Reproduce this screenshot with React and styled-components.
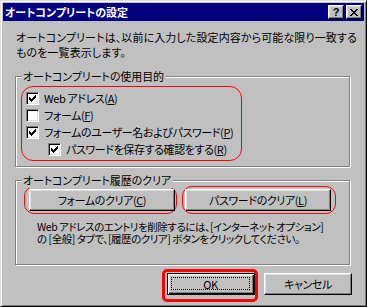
import React from "react";
import styled, { createGlobalStyle } from "styled-components";

const GlobalStyle = createGlobalStyle`
  html, body { margin: 0; padding: 0; background: #c0c0c0; }
  body { font-family: "Noto Sans CJK JP", "Liberation Sans", sans-serif; }
`;

const Window = styled.div`
  width: 367px;
  height: 307px;
  box-sizing: border-box;
  overflow: hidden;
  background: #c0c0c0;
  border: 1px solid;
  border-color: #dfdfdf #000 #000 #dfdfdf;
  box-shadow: inset 1px 1px #fff, inset -1px -1px #808080;
  padding: 2px;
  display: flex;
  flex-direction: column;
  font-size: 11px;
  color: #000;
  font-feature-settings: "palt";
`;

const TitleBar = styled.div`
  height: 18px;
  flex: none;
  background: #000080;
  color: #fff;
  display: flex;
  align-items: center;
  padding: 0 2px;
  font-weight: bold;
  line-height: 18px;
`;

const TitleButtons = styled.div`
  margin-left: auto;
  display: flex;
  gap: 2px;
`;

const CapButton = styled.div`
  box-sizing: border-box;
  width: 16px;
  height: 14px;
  background: #c0c0c0;
  border: 1px solid;
  border-color: #fff #000 #000 #fff;
  box-shadow: inset -1px -1px #808080, inset 1px 1px #dfdfdf;
  display: flex;
  align-items: center;
  justify-content: center;
  color: #000;
  font-family: "Liberation Sans", sans-serif;
  font-weight: bold;
  font-size: 11px;
  line-height: 12px;
`;

const Body = styled.div`
  display: flex;
  flex-direction: column;
  padding: 9px 14px 0 12px;
`;

const Description = styled.p`
  margin: 0 0 0 1px;
  line-height: 15px;
  white-space: nowrap;
  letter-spacing: 0.1px;
`;

const Group = styled.div`
  position: relative;
  flex: none;
  margin-top: ${p => p.$mt}px;
  height: ${p => p.$h}px;
  box-sizing: border-box;
  border: 1px solid #808080;
  box-shadow: inset 1px 1px #fff, 1px 1px #fff;
  padding: ${p => p.$pad};
`;

const Legend = styled.span`
  position: absolute;
  top: -9px;
  left: 6px;
  padding: 0 2px 0 1px;
  background: #c0c0c0;
  line-height: 16px;
  white-space: nowrap;
  letter-spacing: -0.1px;
`;

const Highlight = styled.div`
  box-sizing: border-box;
  border: ${p => p.$bw || 1}px solid #ff0000;
  border-radius: ${p => p.$r}px;
  padding: ${p => p.$pad};
  width: ${p => (p.$w ? `${p.$w}px` : "auto")};
`;

const CheckList = styled.div`
  display: flex;
  flex-direction: column;
  gap: 4px;
`;

const CheckRow = styled.label`
  display: flex;
  align-items: center;
  gap: 5px;
  height: 13px;
  line-height: 13px;
  margin-left: ${p => (p.$indent ? 22 : 0)}px;
  white-space: nowrap;
  letter-spacing: -0.4px;
`;

const Box = styled.span`
  box-sizing: border-box;
  width: 13px;
  height: 13px;
  flex: none;
  background: #fff;
  border: 1px solid;
  border-color: #808080 #fff #fff #808080;
  box-shadow: inset 1px 1px #000, inset -1px -1px #dfdfdf;
  position: relative;
  svg { position: absolute; left: -1px; top: -1px; }
`;

const ButtonRow = styled.div`
  display: flex;
  gap: 5px;
`;

const Button = styled.div`
  box-sizing: border-box;
  width: ${p => p.$w}px;
  height: 22px;
  background: #c0c0c0;
  border: 1px solid;
  border-color: #fff #000 #000 #fff;
  box-shadow: inset -1px -1px #808080, inset 1px 1px #dfdfdf;
  display: flex;
  align-items: center;
  justify-content: center;
  line-height: 14px;
  white-space: nowrap;
  letter-spacing: -0.4px;
`;

const DefaultButton = styled(Button)`
  border-color: #000;
  box-shadow: inset 1px 1px #fff, inset -1px -1px #000, inset -2px -2px #808080,
    inset 2px 2px #dfdfdf;
  padding: 3px 4px 4px 3px;
`;

const Focus = styled.span`
  flex: 1;
  align-self: stretch;
  border: 1px dotted #000;
  display: flex;
  align-items: center;
  justify-content: center;
`;

const Info = styled.p`
  margin: 7px 0 0 13px;
  font-size: 10.5px;
  line-height: 12px;
  white-space: nowrap;
  letter-spacing: -0.45px;
`;

const Footer = styled.div`
  display: flex;
  justify-content: flex-end;
  align-items: flex-start;
  gap: 6px;
  margin: 4px -2px 0 0;
`;

const Spaced = styled.div`
  margin-top: 4px;
`;

const checkPath =
  "M3 5h1v3h-1zM4 6h1v3h-1zM5 7h1v3h-1zM6 6h1v3h-1zM7 5h1v3h-1zM8 4h1v3h-1zM9 3h1v3h-1z";

const CheckBox = ({ checked }) => (
  <Box>
    {checked && (
      <svg width="13" height="13" viewBox="0 0 13 13" shapeRendering="crispEdges">
        <path d={checkPath} fill="#000" />
      </svg>
    )}
  </Box>
);

const CloseGlyph = () => (
  <svg width="8" height="7" viewBox="0 0 8 7" shapeRendering="crispEdges">
    <path
      d="M0 0h2v1h-2zM6 0h2v1h-2zM1 1h2v1h-2zM5 1h2v1h-2zM2 2h4v1h-4zM3 3h2v1h-2zM2 4h4v1h-4zM1 5h2v1h-2zM5 5h2v1h-2zM0 6h2v1h-2zM6 6h2v1h-2z"
      fill="#000"
    />
  </svg>
);

const items = [
  { label: "Web アドレス", key: "A", checked: true },
  { label: "フォーム", key: "F", checked: false },
  { label: "フォームのユーザー名およびパスワード", key: "P", checked: true },
  { label: "パスワードを保存する確認をする", key: "R", checked: true, indent: true },
];

export default function App() {
  return (
    <>
      <GlobalStyle />
      <Window>
        <TitleBar>
          オートコンプリートの設定
          <TitleButtons>
            <CapButton>?</CapButton>
            <CapButton>
              <CloseGlyph />
            </CapButton>
          </TitleButtons>
        </TitleBar>
        <Body>
          <Description>
            オートコンプリートは、以前に入力した設定内容から可能な限り一致する
            <br />
            ものを一覧表示します。
          </Description>

          <Group $mt={16} $h={91} $pad="9px 0 0 5px">
            <Legend>オートコンプリートの使用目的</Legend>
            <Highlight $w={221} $r={12} $pad="5px 4px 4px 4px">
              <CheckList>
                {items.map(it => (
                  <CheckRow key={it.key} $indent={it.indent}>
                    <CheckBox checked={it.checked} />
                    <span>
                      {it.label}(<u>{it.key}</u>)
                    </span>
                  </CheckRow>
                ))}
              </CheckList>
            </Highlight>
          </Group>

          <Group $mt={13} $h={85} $pad="5px 0 0 8px">
            <Legend>オートコンプリート履歴のクリア</Legend>
            <ButtonRow>
              <Highlight $r={10} $pad="2px 1px 2px 4px">
                <Button $w={146}>
                  フォームのクリア(<u>C</u>)
                </Button>
              </Highlight>
              <Highlight $r={10} $pad="2px 4px 2px 2px">
                <Button $w={146}>
                  パスワードのクリア(<u>L</u>)
                </Button>
              </Highlight>
            </ButtonRow>
            <Info>
              Web アドレスのエントリを削除するには、[インターネット オプション]
              <br />
              の [全般] タブで、[履歴のクリア] ボタンをクリックしてください。
            </Info>
          </Group>

          <Footer>
            <Highlight $bw={3} $r={5} $pad="1px 0 4px 2px">
              <DefaultButton $w={88}>
                <Focus>OK</Focus>
              </DefaultButton>
            </Highlight>
            <Spaced>
              <Button $w={88}>キャンセル</Button>
            </Spaced>
          </Footer>
        </Body>
      </Window>
    </>
  );
}
